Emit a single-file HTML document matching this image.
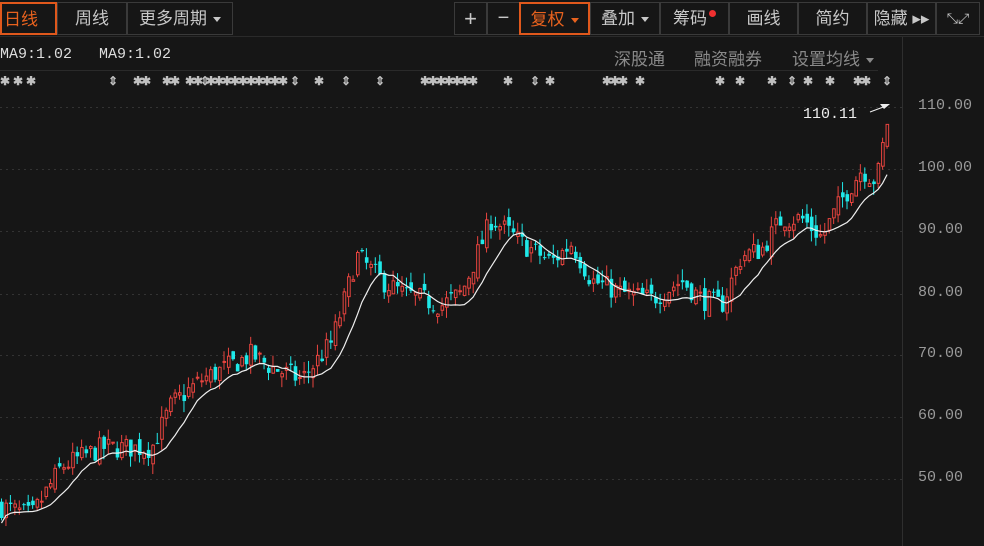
<!DOCTYPE html>
<html><head><meta charset="utf-8"><style>
body{margin:0;background:#161616;width:984px;height:546px;overflow:hidden;font-family:"Liberation Sans","Noto Sans CJK SC",sans-serif;position:relative}
.b{position:absolute;top:2px;border:1px solid #3a3a3a;color:#c8c8c8;font-size:17px;line-height:31px;text-align:center;box-sizing:border-box;height:33px}
.on{border:2px solid #e0581c;color:#e8621e}
.tri{display:inline-block;width:0;height:0;border-left:4px solid transparent;border-right:4px solid transparent;border-top:5px solid #c8c8c8;vertical-align:middle;margin-left:6px}
.t{position:absolute;color:#8a8a8a;font-size:17px}
.ax{position:absolute;left:918px;color:#9a9a9a;font-family:"Liberation Mono",monospace;font-size:15px}
.st{position:absolute;top:74px;color:#c0c0c0;font-size:12px;font-weight:bold}
</style></head><body>
<div class="b on" style="left:0;width:57px;text-align:left;padding-left:2px">日线</div>
<div class="b" style="left:57px;width:70px">周线</div>
<div class="b" style="left:127px;width:106px">更多周期<span class="tri"></span></div>
<div class="b" style="left:454px;width:33px;font-size:22px">+</div>
<div class="b" style="left:487px;width:33px;font-size:20px">−</div>
<div class="b on" style="left:519px;width:71px">复权<span class="tri" style="border-top-color:#e8621e"></span></div>
<div class="b" style="left:590px;width:70px">叠加<span class="tri"></span></div>
<div class="b" style="left:660px;width:69px">筹码<span style="display:inline-block;width:7px;height:7px;border-radius:50%;background:#f03030;vertical-align:top;margin-top:7px;margin-left:2px"></span></div>
<div class="b" style="left:729px;width:69px">画线</div>
<div class="b" style="left:798px;width:69px">简约</div>
<div class="b" style="left:867px;width:69px">隐藏 ▸▸</div>
<div class="b" style="left:936px;width:44px;font-size:14px">⤡⤢</div>
<div style="position:absolute;left:0;top:36px;width:984px;height:1px;background:#2a2a2a"></div>
<div style="position:absolute;left:0;top:46px;color:#ddd;font-family:'Liberation Mono',monospace;font-size:15px;white-space:pre">MA9:1.02   MA9:1.02</div>
<div class="t" style="left:614px;top:45px">深股通</div>
<div class="t" style="left:694px;top:45px">融资融券</div>
<div class="t" style="left:792px;top:45px">设置均线<span class="tri" style="border-top-color:#8a8a8a"></span></div>
<div style="position:absolute;left:0;top:70px;width:878px;height:1px;background:#2a2a2a"></div>
<div style="position:absolute;left:902px;top:37px;width:1px;height:509px;background:#2e2e2e"></div>
<div id="stars"></div>
<div class="ax" style="top:97px">110.00</div>
<div class="ax" style="top:159px">100.00</div>
<div class="ax" style="top:221px">90.00</div>
<div class="ax" style="top:284px">80.00</div>
<div class="ax" style="top:345px">70.00</div>
<div class="ax" style="top:407px">60.00</div>
<div class="ax" style="top:469px">50.00</div>
<div style="position:absolute;left:803px;top:106px;color:#eee;font-family:'Liberation Mono',monospace;font-size:15px">110.11</div>
<svg id="s" width="984" height="546" style="position:absolute;left:0;top:0"></svg>
<script>
var S=[0,13,26,'108u',133,141,162,170,185,193,'200u',206,214,222,230,238,246,254,262,270,278,'290u',314,'341u','375u',420,428,436,444,452,460,468,503,'530u',545,602,610,618,635,715,735,767,'787u',803,825,853,861,'882u'],sh='';
S.forEach(function(v){var u=typeof v=='string';sh+='<span class="st" style="left:'+parseInt(v)+'px">'+(u?'⇕':'✱')+'</span>'});
document.getElementById('stars').innerHTML=sh;
var s=document.getElementById('s'),h='';
function Y(p){return 479-(p-50)*6.2}
[107,169,231,294,355,417,479].forEach(function(y){h+='<line x1="0" x2="902" y1="'+(y+0.5)+'" y2="'+(y+0.5)+'" stroke="#333" stroke-dasharray="2,4"/>'});
h+='<line x1="870" y1="112" x2="886" y2="106" stroke="#eee"/><path d="M880,104 L890,104 L884,109Z" fill="#eee"/>';
var K=[[0,45.5],[30,44],[60,52],[100,55],[150,55],[170,62],[200,66],[250,70],[270,68],[300,66],[330,72],[345,80],[355,86],[380,82],[400,80],[440,78],[460,80],[480,88],[490,92],[520,88],[550,85],[570,88],[590,82],[620,80],[650,79],[680,82],[700,79],[720,78],[740,86],[760,87],[780,92],[800,92],[820,89],[840,95],[860,100],[875,98],[886,108],[893,106]];
function P(x){for(var i=1;i<K.length;i++)if(x<=K[i][0]){var a=K[i-1],b=K[i];return a[1]+(b[1]-a[1])*(x-a[0])/(b[0]-a[0])}return 106}
var seed=7;function r(){seed=(seed*16807)%2147483647;return seed/2147483647}
var cl=[],prev=P(0),pts=[];
for(var x=0;x<=890;x+=4.45){var c=P(x)+(r()-0.5)*3.6,o=prev+(r()-0.5)*2;var hi=Math.max(o,c)+r()*1.8,lo=Math.min(o,c)-r()*1.8;cl.push(c);prev=c;
var up=c>=o,col=up?'#e8443f':'#1fe8e8',yt=Y(Math.max(o,c)),yb=Y(Math.min(o,c));if(yb-yt<1)yb=yt+1;
h+='<line x1="'+(x+1.5)+'" x2="'+(x+1.5)+'" y1="'+Y(hi)+'" y2="'+Y(lo)+'" stroke="'+col+'"/>';
h+=up?'<rect x="'+(x+0.5)+'" y="'+yt+'" width="2.6" height="'+(yb-yt)+'" fill="#161616" stroke="'+col+'"/>':'<rect x="'+x+'" y="'+yt+'" width="3.6" height="'+(yb-yt)+'" fill="'+col+'"/>';
var n=Math.min(9,cl.length),m=0;for(var j=cl.length-n;j<cl.length;j++)m+=cl[j];pts.push((x+1.5)+','+Y(m/n-0.8));}
h+='<polyline points="'+pts.join(' ')+'" fill="none" stroke="#eee" stroke-width="1.2"/>';
s.innerHTML=h;
</script>
</body></html>
